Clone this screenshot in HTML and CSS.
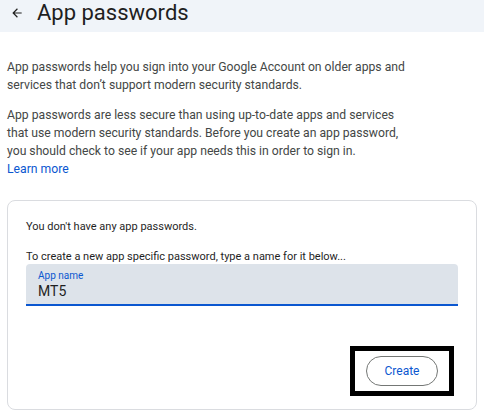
FILE: index.html
```html
<!DOCTYPE html>
<html lang="en">
<head>
    <meta charset="UTF-8">
    <title>App passwords</title>
    <link rel="stylesheet" href="styles.css">
</head>
<body>
<div class="header">
    <span class="back">
        <svg width="14" height="14" viewBox="0 0 24 24"><path d="M20 11H7.83l5.59-5.59L12 4l-8 8 8 8 1.41-1.41L7.83 13H20v-2z" fill="#1f1f1f"/></svg>
    </span>
    <span class="title">App passwords</span>
</div>

<div class="content">
    <p class="text">App passwords help you sign into your Google Account on older apps and services that don’t support modern security standards.</p>
    <p class="text">App passwords are less secure than using up-to-date apps and services that use modern security standards. Before you create an app password, you should check to see if your app needs this in order to sign in.<br><a href="#" class="link">Learn more</a></p>

    <div class="card">
        <p class="card-text">You don't have any app passwords.</p>
        <p class="card-text hint">To create a new app specific password, type a name for it below...</p>
        <div class="field">
            <div class="field-label">App name</div>
            <div class="field-value">MT5</div>
        </div>
        <div class="actions">
            <div class="highlight">
                <button class="btn">Create</button>
            </div>
        </div>
    </div>
</div>
</body>
</html>
```

FILE: styles.css
```css
html,
body {
    margin: 0;
    padding: 0;
    background: #fff;
    font-family: Roboto, "Liberation Sans", Arial, sans-serif;
    color: #1f1f1f;
}

.header {
    height: 32px;
    background: #f0f4f9;
    display: flex;
    align-items: flex-start;
}

.back {
    width: 33px;
    height: 26px;
    display: flex;
    align-items: center;
    justify-content: center;
}

.back svg {
    display: block;
}

.title {
    font-size: 22px;
    line-height: 26px;
    margin-left: 4px;
    color: #1f1f1f;
}

.content {
    padding: 26px 7px 0;
}

.text {
    margin: 0 0 12px;
    max-width: 408px;
    font-size: 12.2px;
    line-height: 18px;
    color: #444746;
}

.link {
    color: #0b57d0;
    text-decoration: none;
}

.card {
    margin-top: 22px;
    border: 1px solid #dadce0;
    border-radius: 8px;
    padding: 19px 18px 12px;
    height: 177px;
}

.card-text {
    margin: 0 0 16px;
    font-size: 11px;
    line-height: 14px;
    color: #1f1f1f;
}

.card-text.hint {
    margin-bottom: 0;
}

.field {
    background: #dde3ea;
    border-bottom: 2px solid #0b57d0;
    border-radius: 4px 4px 0 0;
    padding: 5px 12px 4px;
}

.field-label {
    font-size: 10px;
    line-height: 13px;
    color: #0b57d0;
}

.field-value {
    font-size: 14px;
    line-height: 18px;
    color: #1f1f1f;
}

.actions {
    display: flex;
    justify-content: flex-end;
    margin-top: 40px;
    padding-right: 4px;
}

.highlight {
    border: 5px solid #000;
    padding: 5px 11px;
}

.btn {
    width: 72px;
    height: 30px;
    border: 1px solid #747775;
    border-radius: 15px;
    background: #fff;
    color: #0b57d0;
    font-family: Roboto, "Liberation Sans", Arial, sans-serif;
    font-size: 12px;
    padding: 0;
}
```
